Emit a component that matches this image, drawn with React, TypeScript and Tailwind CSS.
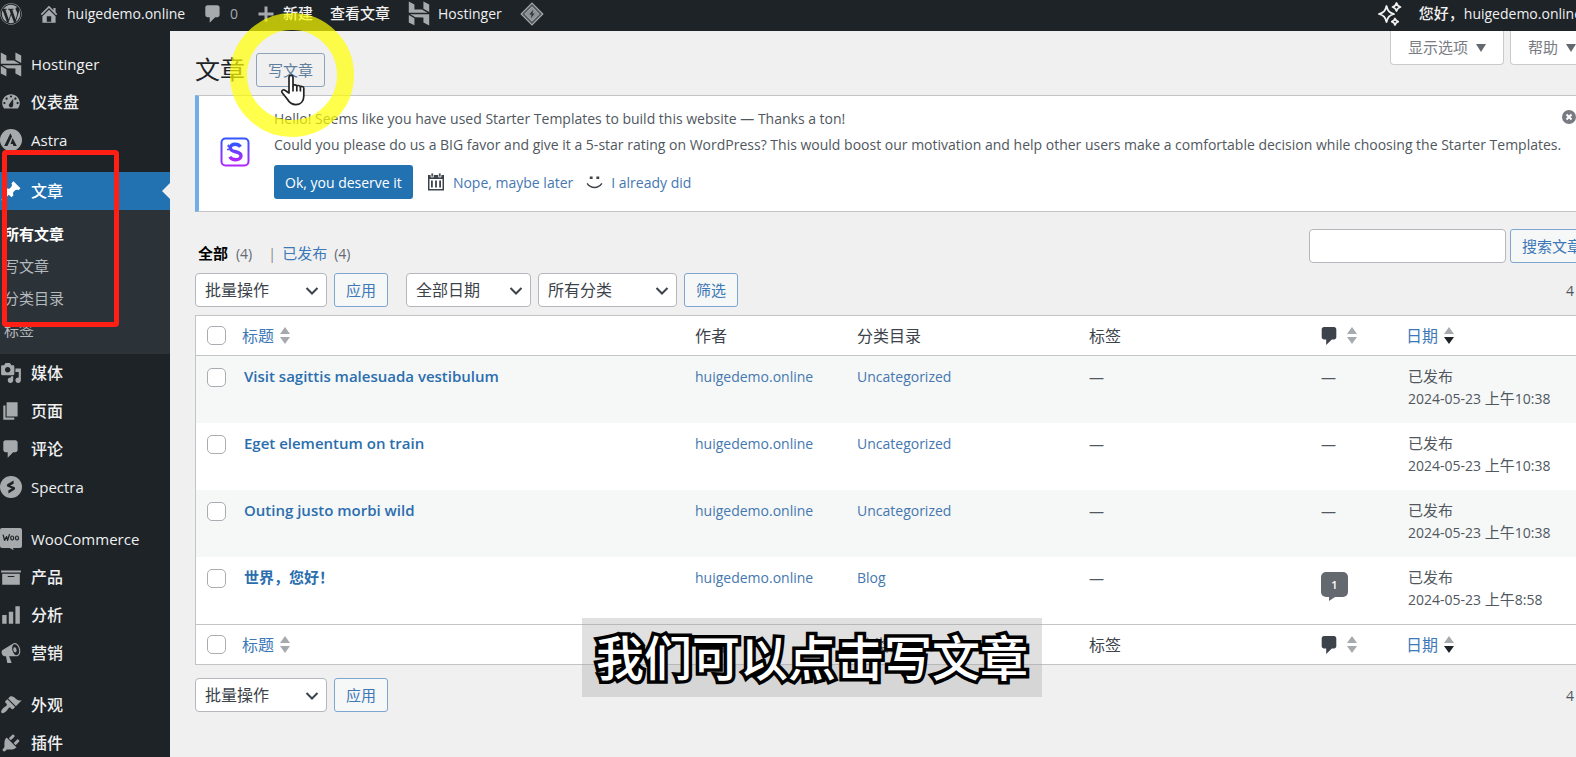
import type { ReactNode } from "react";
import { FaWordpress } from "react-icons/fa";

const icons = {
  home: "M16 8.5l1.53 1.53-1.06 1.06L10 4.6l-6.47 6.49-1.06-1.06L10 2.5l4 4v-2h2v4zm-6-2.46l6 5.99V18H4v-5.97zM12 17v-5H8v5h4z",
  comment: "M5 2h9c1.1 0 2 .9 2 2v7c0 1.1-.9 2-2 2h-2l-5 5v-5H5c-1.1 0-2-.9-2-2V4c0-1.1.9-2 2-2z",
  plus: "M17.5 8.5v3h-6v6h-3v-6h-6v-3h6v-6h3v6z",
  dashboard:
    "M3.76 16h12.48c1.1-1.37 1.76-3.11 1.76-5 0-4.42-3.58-8-8-8s-8 3.58-8 8c0 1.89.66 3.63 1.76 5zM10 4c.55 0 1 .45 1 1s-.45 1-1 1-1-.45-1-1 .45-1 1-1zM6 6c.55 0 1 .45 1 1s-.45 1-1 1-1-.45-1-1 .45-1 1-1zm8 0c.55 0 1 .45 1 1s-.45 1-1 1-1-.45-1-1 .45-1 1-1zm-5.37 5.55L12 7v6c0 1.1-.9 2-2 2s-2-.9-2-2c0-.57.24-1.08.63-1.45zM4 10c.55 0 1 .45 1 1s-.45 1-1 1-1-.45-1-1 .45-1 1-1zm12 0c.55 0 1 .45 1 1s-.45 1-1 1-1-.45-1-1 .45-1 1-1z",
  pin: "M10.44 3.02l1.82-1.82 6.36 6.35-1.83 1.82c-1.05-.68-2.48-.57-3.41.36l-.75.75c-.92.93-1.04 2.35-.35 3.41l-1.83 1.82-2.41-2.41-2.8 2.79c-.42.42-3.38 2.71-3.8 2.29s1.86-3.39 2.28-3.81l2.79-2.79L4.1 9.36l1.83-1.82c1.05.69 2.48.57 3.4-.36l.75-.75c.93-.92 1.05-2.35.36-3.41z",
  media:
    "M13 11V4c0-.55-.45-1-1-1h-1.67L9 1H5L3.67 3H2c-.55 0-1 .45-1 1v7c0 .55.45 1 1 1h10c.55 0 1-.45 1-1zM7 4.5c1.38 0 2.5 1.12 2.5 2.5S8.38 9.5 7 9.5 4.5 8.38 4.5 7 5.62 4.5 7 4.5zM14 6h5v10.5c0 1.38-1.12 2.5-2.5 2.5S14 17.88 14 16.5s1.12-2.5 2.5-2.5c.17 0 .34.02.5.05V9h-3V6zm-4 8.05V13h2v3.5c0 1.38-1.12 2.5-2.5 2.5S7 17.88 7 16.5 8.12 14 9.5 14c.17 0 .34.02.5.05z",
  page: "M6 15V2h10v13H6zm-1 1h8v2H3V5h2v11z",
  archive: "M19 4v2H1V4h18zM2 7h16v10H2V7zm11 3V9H7v1h6z",
  chart: "M18 18V2h-4v16h4zm-6 0V7H8v11h4zm-6 0v-8H2v8h4z",
  megaphone:
    "M18.15 5.94c.46 1.62.38 3.22-.02 4.48-.42 1.28-1.26 2.18-2.3 2.48-.16.06-.26.06-.4.06-.06.02-.12.02-.18.02-.06.02-.14.02-.22.02h-6.8l2.22 5.5c.02.14-.06.26-.14.34-.08.1-.24.16-.34.16H6.95c-.1 0-.26-.06-.34-.16-.08-.08-.16-.2-.14-.34l-1-5.5H4.25l-.02-.02c-.5.06-1.08-.18-1.54-.62s-.88-1.08-1.06-1.88c-.24-.8-.2-1.56-.02-2.2.18-.62.58-1.08 1.06-1.3l.02-.02 9-5.4c.1-.06.18-.1.24-.16.06-.04.14-.08.24-.12.16-.08.28-.12.5-.18 1.04-.3 2.24.1 3.22.98s1.84 2.24 2.26 3.86zm-2.58 5.98h-.02c.4-.1.74-.34 1.04-.7.58-.7.86-1.76.86-3.04 0-.64-.1-1.3-.28-1.98-.34-1.36-1.02-2.5-1.78-3.24s-1.68-1.1-2.46-.88c-.82.22-1.4.96-1.7 2-.32 1.04-.28 2.36.06 3.72.38 1.36 1 2.5 1.8 3.24.78.74 1.62 1.1 2.48.88zm-2.54-7.08c.22-.04.42-.02.62.04.38.16.76.48 1.02 1s.42 1.2.42 1.78c0 .3-.04.56-.12.8-.18.48-.44.84-.86.94-.34.1-.8-.06-1.14-.4s-.64-.86-.78-1.5c-.18-.62-.12-1.24.02-1.72s.48-.84.82-.94z",
  brush:
    "M14.48 11.06L7.41 3.99l1.5-1.5c.5-.56 2.3-.47 3.51.32 1.21.8 1.43 1.28 2.91 2.1 1.18.64 2.45 1.26 4.45.85zm-.71.71L6.7 4.7 4.93 6.47c-.39.39-.39 1.02 0 1.41l1.06 1.06c.39.39.39 1.03 0 1.42-.6.6-1.43 1.11-2.21 1.69-.35.26-.7.53-1.01.84C1.43 14.23.4 16.08 1.4 17.07c.99 1 2.84-.03 4.18-1.36.31-.31.58-.66.85-1.02.57-.78 1.08-1.61 1.69-2.21.39-.39 1.02-.39 1.41 0l1.06 1.06c.39.39 1.02.39 1.41 0z",
  plug: "M13.11 4.36L9.87 7.6 8 5.73l3.24-3.24c.35-.34 1.05-.2 1.56.32.52.51.66 1.21.31 1.55zm-8 1.77l.91-1.12 9.01 9.01-1.19.84c-.71.71-2.63 1.16-3.82 1.16H6.14L4.9 17.26c-.59.59-1.54.59-2.12 0-.59-.58-.59-1.53 0-2.12l1.24-1.24v-3.88c0-1.13.4-3.19 1.09-3.89zm7.26 3.97l3.24-3.24c.34-.35 1.04-.21 1.55.31.52.51.66 1.21.31 1.55l-3.24 3.25z",
};

function Icon({ name, size = 22, className }: { name: keyof typeof icons; size?: number; className?: string }) {
  return (
    <svg viewBox="0 0 20 20" width={size} height={size} fill="currentColor" className={className} aria-hidden>
      <path d={icons[name]} />
    </svg>
  );
}

function HostingerIcon() {
  return (
    <svg viewBox="1 0 22 24" width={22} height={25} fill="currentColor" aria-hidden>
      <path d="M16.415 0v7.16l5.785 3.384V2.949L16.415 0ZM1.8 0v11.237h18.815L14.89 8.09l-7.457-.003V3.024L1.8 0Zm14.615 20.894v-5.019l-7.514-.005c.007.033-5.82-3.197-5.82-3.197l19.119.091V24l-5.785-3.106ZM1.8 13.551v7.343l5.633 2.949v-6.988L1.8 13.551Z" />
    </svg>
  );
}

function AstraIcon() {
  return (
    <svg viewBox="0 0 22 22" width={22} height={22} aria-hidden>
      <circle cx="11" cy="11" r="11" fill="currentColor" />
      <path d="M10.4 4.2 12 7.4 7.4 17H4.2z" fill="#1d2327" />
      <path d="M12.6 9 16.8 17h-3.2l-.9-2.1h-2.2z" fill="#1d2327" />
    </svg>
  );
}

function SpectraIcon() {
  return (
    <svg viewBox="0 0 22 22" width={22} height={22} aria-hidden>
      <circle cx="11" cy="11" r="11" fill="currentColor" />
      <path d="M13.6 4.6v3.2L10.2 9.4l4 1.6c1.2.6 1.2 2 .2 2.7l-6 3.9v-3.3l3.4-1.9-3.9-1.6c-1.4-.6-1.4-2.1-.2-2.9z" fill="#1d2327" />
    </svg>
  );
}

function WooIcon() {
  return (
    <svg viewBox="0 0 22 22" width={22} height={22} aria-hidden>
      <path d="M2 0h18a2 2 0 0 1 2 2v16a2 2 0 0 1-2 2h-7l.6 2.2L9.8 20H2a2 2 0 0 1-2-2V2a2 2 0 0 1 2-2z" fill="currentColor" />
      <path
        d="M3.2 7.2 4.6 12.4 6.6 8.6 7.6 12.4 9.4 6.6"
        fill="none"
        stroke="#1d2327"
        strokeWidth="1.3"
        strokeLinecap="round"
        strokeLinejoin="round"
      />
      <ellipse cx="12.2" cy="10" rx="1.5" ry="2" fill="none" stroke="#1d2327" strokeWidth="1.2" />
      <ellipse cx="17" cy="10" rx="1.5" ry="2" fill="none" stroke="#1d2327" strokeWidth="1.2" />
    </svg>
  );
}

function DiamondIcon() {
  return (
    <svg viewBox="0 0 24 24" width={24} height={24} aria-hidden>
      <path d="M12 1.2 22.8 12 12 22.8 1.2 12z" fill="#50565c" stroke="#a7aaad" strokeWidth="1.2" />
      <path d="M12 4.8 19.2 12 12 19.2 4.8 12z" fill="#8c9196" stroke="#a7aaad" strokeWidth="1" />
      <path d="M13.2 7.8 9.4 12.6h2.2l-.8 3.6 3.8-4.8h-2.2z" fill="#2c3338" />
    </svg>
  );
}

function SparkleIcon() {
  return (
    <svg viewBox="0 0 26 26" width={26} height={26} fill="none" stroke="#f0f0f1" strokeWidth="1.8" strokeLinejoin="round" aria-hidden>
      <path d="M9.5 5c1.2 4.8 2.8 6.6 7.6 8-4.8 1.4-6.4 3.2-7.6 8-1.2-4.8-2.8-6.6-7.6-8 4.8-1.4 6.4-3.2 7.6-8z" />
      <path d="M19.5 2c.6 2.4 1.5 3.3 4 4-2.5.7-3.4 1.6-4 4-.6-2.4-1.5-3.3-4-4 2.5-.7 3.4-1.6 4-4z" />
      <path d="M18 17.5c.5 1.9 1.2 2.6 3.2 3.2-2 .6-2.7 1.3-3.2 3.2-.5-1.9-1.2-2.6-3.2-3.2 2-.6 2.7-1.3 3.2-3.2z" />
    </svg>
  );
}

function StarterIcon() {
  return (
    <svg viewBox="0 0 30 30" width={30} height={30} fill="none" className="shrink-0" aria-hidden>
      <defs>
        <linearGradient id="starter" x1="0" y1="0" x2="0" y2="1">
          <stop offset="0" stopColor="#3355ff" />
          <stop offset="1" stopColor="#b026ff" />
        </linearGradient>
      </defs>
      <rect x="1.5" y="1.5" width="27" height="27" rx="4" stroke="url(#starter)" strokeWidth="2" />
      <path
        d="M20.5 9.8c-1.2-1.8-3.1-2.6-5.3-2.6-2.8 0-4.9 1.4-4.9 3.7 0 5 10.7 2.7 10.7 7.8 0 2.5-2.3 4.1-5.3 4.1-2.6 0-4.7-.9-6-2.9"
        stroke="url(#starter)"
        strokeWidth="3.4"
      />
      <path d="M8.5 7.5v3M7 9h3M8 11.5v2M7 12.500h2" stroke="#5b4bff" strokeWidth="1" />
    </svg>
  );
}

function CalendarIcon() {
  return (
    <svg viewBox="0 0 18 18" width={18} height={18} fill="#3c434a" aria-hidden>
      <path d="M1 2h16v15.5H1zM2.5 6v10h13V6z" fillRule="evenodd" />
      <path d="M4 7.5h1.8v7H4zM8.1 7.5h1.8v7H8.1zM12.200 7.5H14v7h-1.800z" />
      <path d="M4 0h2.4v4H4zM11.6 0H14v4h-2.4z" stroke="#fff" strokeWidth=".8" />
    </svg>
  );
}

function SmileIcon() {
  return (
    <svg viewBox="0 0 18 18" width={17} height={18} fill="none" stroke="#3c434a" strokeWidth="1.6" aria-hidden>
      <path d="M4 4.500h3M11 4.500h3" strokeWidth="2.4" />
      <path d="M1.2 10.500c4 5.800 11.600 5.800 15.600 0" />
    </svg>
  );
}

type MenuItem = { label: string; icon: ReactNode; latin?: boolean; gap?: boolean };

const topMenu: MenuItem[] = [
  { label: "Hostinger", icon: <HostingerIcon />, latin: true },
  { label: "仪表盘", icon: <Icon name="dashboard" /> },
  { label: "Astra", icon: <AstraIcon />, latin: true },
];

const bottomMenu: MenuItem[] = [
  { label: "媒体", icon: <Icon name="media" /> },
  { label: "页面", icon: <Icon name="page" /> },
  { label: "评论", icon: <Icon name="comment" /> },
  { label: "Spectra", icon: <SpectraIcon />, latin: true },
  { label: "WooCommerce", icon: <WooIcon />, latin: true, gap: true },
  { label: "产品", icon: <Icon name="archive" /> },
  { label: "分析", icon: <Icon name="chart" /> },
  { label: "营销", icon: <Icon name="megaphone" /> },
  { label: "外观", icon: <Icon name="brush" />, gap: true },
  { label: "插件", icon: <Icon name="plug" /> },
];

const posts = [
  { title: "Visit sagittis malesuada vestibulum", category: "Uncategorized", comments: 0, time: "上午10:38" },
  { title: "Eget elementum on train", category: "Uncategorized", comments: 0, time: "上午10:38" },
  { title: "Outing justo morbi wild", category: "Uncategorized", comments: 0, time: "上午10:38" },
  { title: "世界，您好！", category: "Blog", comments: 1, time: "上午8:58" },
];

function MenuLink({ item }: { item: MenuItem }) {
  return (
    <li className={item.gap ? "mt-[14px]" : ""}>
      <a href="#" className="flex h-[38px] items-center gap-[9px] text-[#f0f0f1]">
        <span className="flex w-[22px] justify-center text-[#a7aaad]">{item.icon}</span>
        <span className={item.latin ? "text-[15px]" : "text-[16px] font-medium"}>{item.label}</span>
      </a>
    </li>
  );
}

function Sidebar() {
  return (
    <nav className="w-[170px] shrink-0 bg-[#1d2327] pt-[14px]">
      <ul>
        {topMenu.map((item) => (
          <MenuLink key={item.label} item={item} />
        ))}
        <li className="mt-[13px]">
          <a href="#" className="relative flex h-[38px] items-center gap-[9px] bg-[#2271b1] text-white">
            <Icon name="pin" />
            <span className="text-[16px] font-medium">文章</span>
            <span className="absolute right-0 top-[11px] h-0 w-0 border-y-8 border-r-8 border-y-transparent border-r-[#f0f0f1]" />
          </a>
          <ul className="h-[144px] bg-[#2c3338] py-2 pl-1 text-[15px] leading-8 text-[#b4b9be]">
            <li>
              <a href="#" className="block font-bold text-white">所有文章</a>
            </li>
            <li>
              <a href="#" className="block">写文章</a>
            </li>
            <li>
              <a href="#" className="block">分类目录</a>
            </li>
            <li>
              <a href="#" className="block">标签</a>
            </li>
          </ul>
        </li>
        {bottomMenu.map((item) => (
          <MenuLink key={item.label} item={item} />
        ))}
      </ul>
    </nav>
  );
}

function AdminBar() {
  return (
    <header className="flex h-[31px] shrink-0 items-center bg-[#1d2327] pb-1 text-[14px] text-[#f0f0f1]">
      <a href="#" aria-label="WordPress" className="w-[38px] text-[#a7aaad]">
        <FaWordpress size={22} />
      </a>
      <a href="#" className="flex w-[164px] items-center gap-[7px]">
        <Icon name="home" className="text-[#a7aaad]" />
        huigedemo.online
      </a>
      <a href="#" className="flex w-[54px] items-center gap-[6px] text-[#a7aaad]">
        <Icon name="comment" />
        0
      </a>
      <a href="#" className="flex w-[74px] items-center gap-[7px] text-[15px] font-medium">
        <Icon name="plus" size={20} className="text-[#a7aaad]" />
        新建
      </a>
      <a href="#" className="w-[78px] text-[15px] font-medium">查看文章</a>
      <a href="#" className="flex w-[112px] items-center gap-2">
        <span className="text-[#a7aaad]">
          <HostingerIcon />
        </span>
        Hostinger
      </a>
      <a href="#" aria-label="LiteSpeed">
        <DiamondIcon />
      </a>
      <div className="-mr-[6px] ml-auto flex items-center gap-4">
        <SparkleIcon />
        <a href="#" className="whitespace-nowrap">
          <span className="text-[15px] font-medium">您好，</span>huigedemo.online
        </a>
      </div>
    </header>
  );
}

function OutlineButton({ children }: { children: ReactNode }) {
  return (
    <button className="h-[34px] shrink-0 rounded-[3px] border border-[#7fa6d0] bg-[#f6f7f7] px-[11px] text-[15px] whitespace-nowrap text-[#3d78b8]">
      {children}
    </button>
  );
}

function Select({ label, width }: { label: string; width: string }) {
  return (
    <span className={`relative ${width}`}>
      <select
        aria-label={label}
        className="h-[34px] w-full appearance-none rounded-[4px] border border-[#b4b7bb] bg-white pl-[9px] text-[16px] text-[#3c434a]"
      >
        <option>{label}</option>
      </select>
      <svg viewBox="0 0 14 8" className="pointer-events-none absolute right-2 top-[14px] h-2 w-[14px]" fill="none" stroke="#3c434a" strokeWidth="2">
        <path d="M1.5 1 7 6.5 12.5 1" />
      </svg>
    </span>
  );
}

function SortArrows({ desc = false }: { desc?: boolean }) {
  return (
    <svg viewBox="0 0 10 17" width={10} height={17} aria-hidden>
      <path d="M5 0l5 7H0z" fill="#a7aaad" />
      <path d="M5 17l5-7H0z" fill={desc ? "#1d2327" : "#a7aaad"} />
    </svg>
  );
}

function Checkbox({ label }: { label: string }) {
  return (
    <input
      type="checkbox"
      aria-label={label}
      className="block h-[19px] w-[19px] appearance-none rounded-[5px] border border-[#a9acb0] bg-white"
    />
  );
}

function HeadingRow({ edge }: { edge: string }) {
  const th = `h-[40px] text-left font-normal ${edge}`;
  return (
    <tr className="text-[16px] text-[#3c434a]">
      <th className={`w-[38px] pl-[11px] ${edge}`}>
        <Checkbox label="全选" />
      </th>
      <th className={`pl-[8px] ${th}`}>
        <a href="#" className="flex items-center gap-[6px] text-[#3d78b8]">
          标题 <SortArrows />
        </a>
      </th>
      <th className={`w-[162px] pl-[9px] ${th}`}>作者</th>
      <th className={`w-[232px] pl-[9px] ${th}`}>分类目录</th>
      <th className={`w-[232px] pl-[9px] ${th}`}>标签</th>
      <th className={`w-[86px] pl-[9px] ${th}`}>
        <a href="#" aria-label="评论" className="flex items-center gap-[10px]">
          <svg viewBox="3 2 13 16" width={16} height={18} fill="currentColor" aria-hidden>
            <path d={icons.comment} />
          </svg>
          <SortArrows />
        </a>
      </th>
      <th className={`w-[195px] pl-[8px] ${th}`}>
        <a href="#" className="flex items-center gap-[6px] text-[#3d78b8]">
          日期 <SortArrows desc />
        </a>
      </th>
    </tr>
  );
}

function PostRow({ post }: { post: (typeof posts)[number] }) {
  return (
    <tr className="h-[67px] align-top text-[14px] leading-[22px] text-[#50575e] odd:bg-[#f6f7f7]">
      <td className="pt-[12px] pl-[11px]">
        <Checkbox label={post.title} />
      </td>
      <td className="pt-[10px] pl-[10px]">
        <a href="#" className="block text-[15px] leading-5 font-semibold text-[#2a6eae]">{post.title}</a>
      </td>
      <td className="pt-[10px] pl-[9px]">
        <a href="#" className="text-[#4577b0]">huigedemo.online</a>
      </td>
      <td className="pt-[10px] pl-[9px]">
        <a href="#" className="text-[#4577b0]">{post.category}</a>
      </td>
      <td className="pt-[10px] pl-[9px] text-[15px]">—</td>
      <td className="pt-[10px] pl-[9px] text-[15px]">
        {post.comments ? (
          <a href="#" className="mt-[5px] block w-[27px]">
            <span className="block h-[25px] rounded-[5px] bg-[#646970] text-center text-[11px] leading-[25px] font-semibold text-white">
              {post.comments}
            </span>
            <span className="ml-2 block h-0 w-0 border-t-4 border-r-6 border-t-[#646970] border-r-transparent" />
          </a>
        ) : (
          "—"
        )}
      </td>
      <td className="pt-[9px] pl-[10px]">
        <span className="block text-[15px]">已发布</span>
        <span className="block">
          2024-05-23 <span className="text-[15px]">{post.time.slice(0, 2)}</span>
          {post.time.slice(2)}
        </span>
      </td>
    </tr>
  );
}

function Notice() {
  return (
    <section className="flex items-center gap-6 border border-l-4 border-[#c3c4c7] border-l-[#72aee6] bg-white pt-[9px] pr-[17px] pb-[12px] pl-[21px] text-[14px] text-[#50575e]">
      <StarterIcon />
      <div className="min-w-0 flex-1 whitespace-nowrap">
        <p className="leading-[27px]">Hello! Seems like you have used Starter Templates to build this website — Thanks a ton!</p>
        <p className="leading-[26px]">
          Could you please do us a BIG favor and give it a 5-star rating on WordPress? This would boost our motivation and help
          other users make a comfortable decision while choosing the Starter Templates.
        </p>
        <div className="mt-[7px] flex items-center text-[#4577b0]">
          <button className="h-[34px] rounded-[3px] bg-[#2271b1] px-[11px] text-white">Ok, you deserve it</button>
          <a href="#" className="ml-[14px] flex items-center gap-2">
            <CalendarIcon />
            Nope, maybe later
          </a>
          <a href="#" className="ml-[13px] flex items-center gap-2">
            <SmileIcon />
            I already did
          </a>
        </div>
      </div>
      <button aria-label="忽略此通知" className="mt-[5px] shrink-0 self-start">
        <svg viewBox="0 0 14 14" width={14} height={14} aria-hidden>
          <circle cx="7" cy="7" r="7" fill="#787c82" />
          <path d="M4.5 4.5l5 5M9.5 4.5l-5 5" stroke="#fff" strokeWidth="2" />
        </svg>
      </button>
    </section>
  );
}

function ScreenTab({ label }: { label: string }) {
  return (
    <button className="flex h-[34px] items-center gap-2 rounded-b-[4px] border border-t-0 border-[#c9cbce] bg-white px-[17px] text-[15px] text-[#787c82]">
      {label}
      <span className="h-0 w-0 border-x-5 border-t-8 border-x-transparent border-t-[#646970]" />
    </button>
  );
}

function BulkActions() {
  return (
    <>
      <Select label="批量操作" width="w-[132px]" />
      <OutlineButton>应用</OutlineButton>
    </>
  );
}

function PointerRing() {
  return (
    <div className="pointer-events-none absolute top-[13px] left-[230px] h-[124px] w-[124px] rounded-full border-[17px] border-[#ffff00]/70">
      <svg viewBox="0 0 26 32" className="absolute top-[44px] left-[33px] h-8 w-[26px]" fill="#fff" stroke="#222" strokeWidth="1.7" strokeLinejoin="round">
        <path d="M9 19V3.5c0-2.8 4-2.8 4 0V12c0-1.6 3.8-1.6 3.8.5 0-1.5 3.6-1.4 3.6.8 0-1.3 3.4-1.2 3.4 1V22c0 5-3 8.6-8 8.6-4.5 0-6.6-2.2-8.6-5.6L2 18.5c-1-2 1.5-3.6 3.2-2z" />
        <path d="M13 12v5.5M16.8 12.5v5M20.4 13.3v4.2" fill="none" />
      </svg>
    </div>
  );
}

export default function App() {
  return (
    <div className="relative flex h-screen flex-col overflow-hidden bg-[#f0f0f0] font-['Open_Sans','Noto_Sans_CJK_SC',sans-serif]">
      <AdminBar />
      <div className="flex flex-1">
        <Sidebar />
        {/* page body runs past the right edge of the window */}
        <main className="-mr-[18px] min-w-0 flex-1 pl-[25px]">
          <div className="flex h-[64px] items-start">
            <h1 className="mt-[20px] text-[25px] leading-9 text-[#1d2327]">文章</h1>
            <a
              href="#"
              className="mt-[22px] ml-[11px] flex h-[34px] items-center rounded-[3px] border border-[#8ba3bd] px-[11px] text-[15px] text-[#5f7f9f]"
            >
              写文章
            </a>
            <div className="ml-auto flex gap-[6px]">
              <ScreenTab label="显示选项" />
              <ScreenTab label="帮助" />
            </div>
          </div>

          <Notice />

          <div className="mt-[17px] flex items-end justify-between">
            <ul className="flex pl-[3px] text-[15px] leading-[18px] text-[#646970]">
              <li>
                <a href="#" className="font-bold text-black">
                  全部 <span className="ml-1 text-[14px] font-normal text-[#646970]">(4)</span>
                </a>
                <span className="mr-[6px] ml-3 text-[#8c8f94]"> |</span>
              </li>
              <li>
                <a href="#" className="text-[#3d78b8]">
                  已发布 <span className="ml-[3px] text-[14px] text-[#646970]">(4)</span>
                </a>
              </li>
            </ul>
            <div className="flex gap-1">
              <input
                type="search"
                aria-label="搜索文章"
                className="h-[34px] w-[197px] rounded-[4px] border border-[#b4b7bb] bg-white px-2"
              />
              <OutlineButton>搜索文章</OutlineButton>
            </div>
          </div>

          <div className="mt-[10px] mb-[8px] flex items-center gap-[7px] pr-[20px] text-[14px] text-[#50575e]">
            <BulkActions />
            <div className="ml-[11px] flex gap-[7px]">
              <Select label="全部日期" width="w-[125px]" />
              <Select label="所有分类" width="w-[139px]" />
              <OutlineButton>筛选</OutlineButton>
            </div>
            <span className="ml-auto">4</span>
          </div>

          <table className="w-full table-fixed border-separate border-spacing-0 border border-[#c3c4c7] bg-white">
            <thead>
              <HeadingRow edge="border-b border-[#c3c4c7]" />
            </thead>
            <tbody>
              {posts.map((post) => (
                <PostRow key={post.title} post={post} />
              ))}
            </tbody>
            <tfoot>
              <HeadingRow edge="border-t border-[#c3c4c7]" />
            </tfoot>
          </table>

          <div className="mt-[13px] flex items-center gap-[7px] pr-[20px] text-[14px] text-[#50575e]">
            <BulkActions />
            <span className="ml-auto">4</span>
          </div>
        </main>
      </div>

      <PointerRing />
      <div className="pointer-events-none absolute top-[150px] left-[2px] h-[177px] w-[117px] rounded-[4px] border-[5px] border-[#ff1f14]" />
      <p className="absolute top-[618px] left-[582px] w-[460px] bg-[#a0a0a0]/33 text-center text-[48px] leading-[79px] font-medium text-white [-webkit-text-stroke:7px_#000] [paint-order:stroke_fill]">
        我们可以点击写文章
      </p>
    </div>
  );
}
